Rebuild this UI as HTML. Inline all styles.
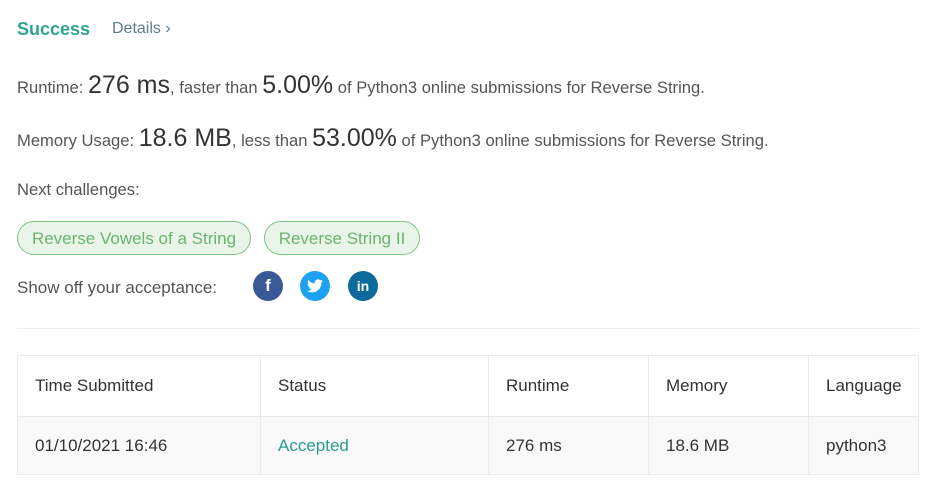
<!DOCTYPE html>
<html><head><style>
body{margin:0;background:#fff;font-family:"Liberation Sans",sans-serif;color:#555;width:931px;height:491px;overflow:hidden;position:relative}
.a{position:absolute;white-space:nowrap}
.big{font-size:25px;color:#333}
.pill{position:absolute;top:221px;height:32px;border:1px solid #7cc47f;background:#e9f5e9;border-radius:17px;color:#6cb46f;font-size:17px;line-height:33px;text-align:center}
.c{position:absolute;top:271px;width:30px;height:30px;border-radius:50%;color:#fff;font-weight:bold;text-align:center;line-height:30px;font-size:15px}
table{position:absolute;left:17px;top:355px;width:902px;border-collapse:collapse;font-size:17px;color:#333}
td{border:1px solid #ebebeb;padding:0 0 0 17px;height:60px}
tr.b td{background:#f9f9f9;height:57px}
</style></head><body>
<div class="a" style="left:17px;top:19px;font-size:18px;font-weight:bold;color:#2fa58f">Success</div>
<div class="a" style="left:112px;top:20px;font-size:16px;color:#607d8b">Details &#8250;</div>
<div class="a" style="left:17px;top:71px;font-size:16.6px">Runtime: <span class="big">276 ms</span>, faster than <span class="big">5.00%</span> of Python3 online submissions for Reverse String.</div>
<div class="a" style="left:17px;top:124px;font-size:16.6px">Memory Usage: <span class="big">18.6 MB</span>, less than <span class="big">53.00%</span> of Python3 online submissions for Reverse String.</div>
<div class="a" style="left:17px;top:180px;font-size:16.6px">Next challenges:</div>
<div class="pill" style="left:17px;width:232px">Reverse Vowels of a String</div>
<div class="pill" style="left:264px;width:154px">Reverse String II</div>
<div class="a" style="left:17px;top:278px;font-size:17px">Show off your acceptance:</div>
<div class="c" style="left:253px;background:#3b5998;font-size:17px">f</div>
<div class="c" style="left:300px;background:#1da1f2"><svg width="16" height="14" viewBox="0 0 24 20" style="margin-top:8px"><path fill="#fff" d="M24 2.4a10 10 0 0 1-2.8.8A5 5 0 0 0 23.3.4a10 10 0 0 1-3.1 1.2A4.9 4.9 0 0 0 11.8 6 14 14 0 0 1 1.7.9a4.9 4.9 0 0 0 1.5 6.6A5 5 0 0 1 1 6.9a4.9 4.9 0 0 0 3.9 4.9 5 5 0 0 1-2.2.1 4.9 4.9 0 0 0 4.6 3.4A9.9 9.9 0 0 1 0 17.3 14 14 0 0 0 7.5 19.5c9.1 0 14-7.5 14-14v-.6A10 10 0 0 0 24 2.4z"/></svg></div>
<div class="c" style="left:348px;background:#0e6a9a;font-size:14px">in</div>
<div class="a" style="left:17px;top:328px;width:902px;height:1px;background:#eee"></div>
<table>
<tr><td style="width:225px">Time Submitted</td><td style="width:210px">Status</td><td style="width:142px">Runtime</td><td style="width:142px">Memory</td><td>Language</td></tr>
<tr class="b"><td>01/10/2021 16:46</td><td style="color:#2a9d8f">Accepted</td><td>276 ms</td><td>18.6 MB</td><td>python3</td></tr>
</table>
</body></html>
